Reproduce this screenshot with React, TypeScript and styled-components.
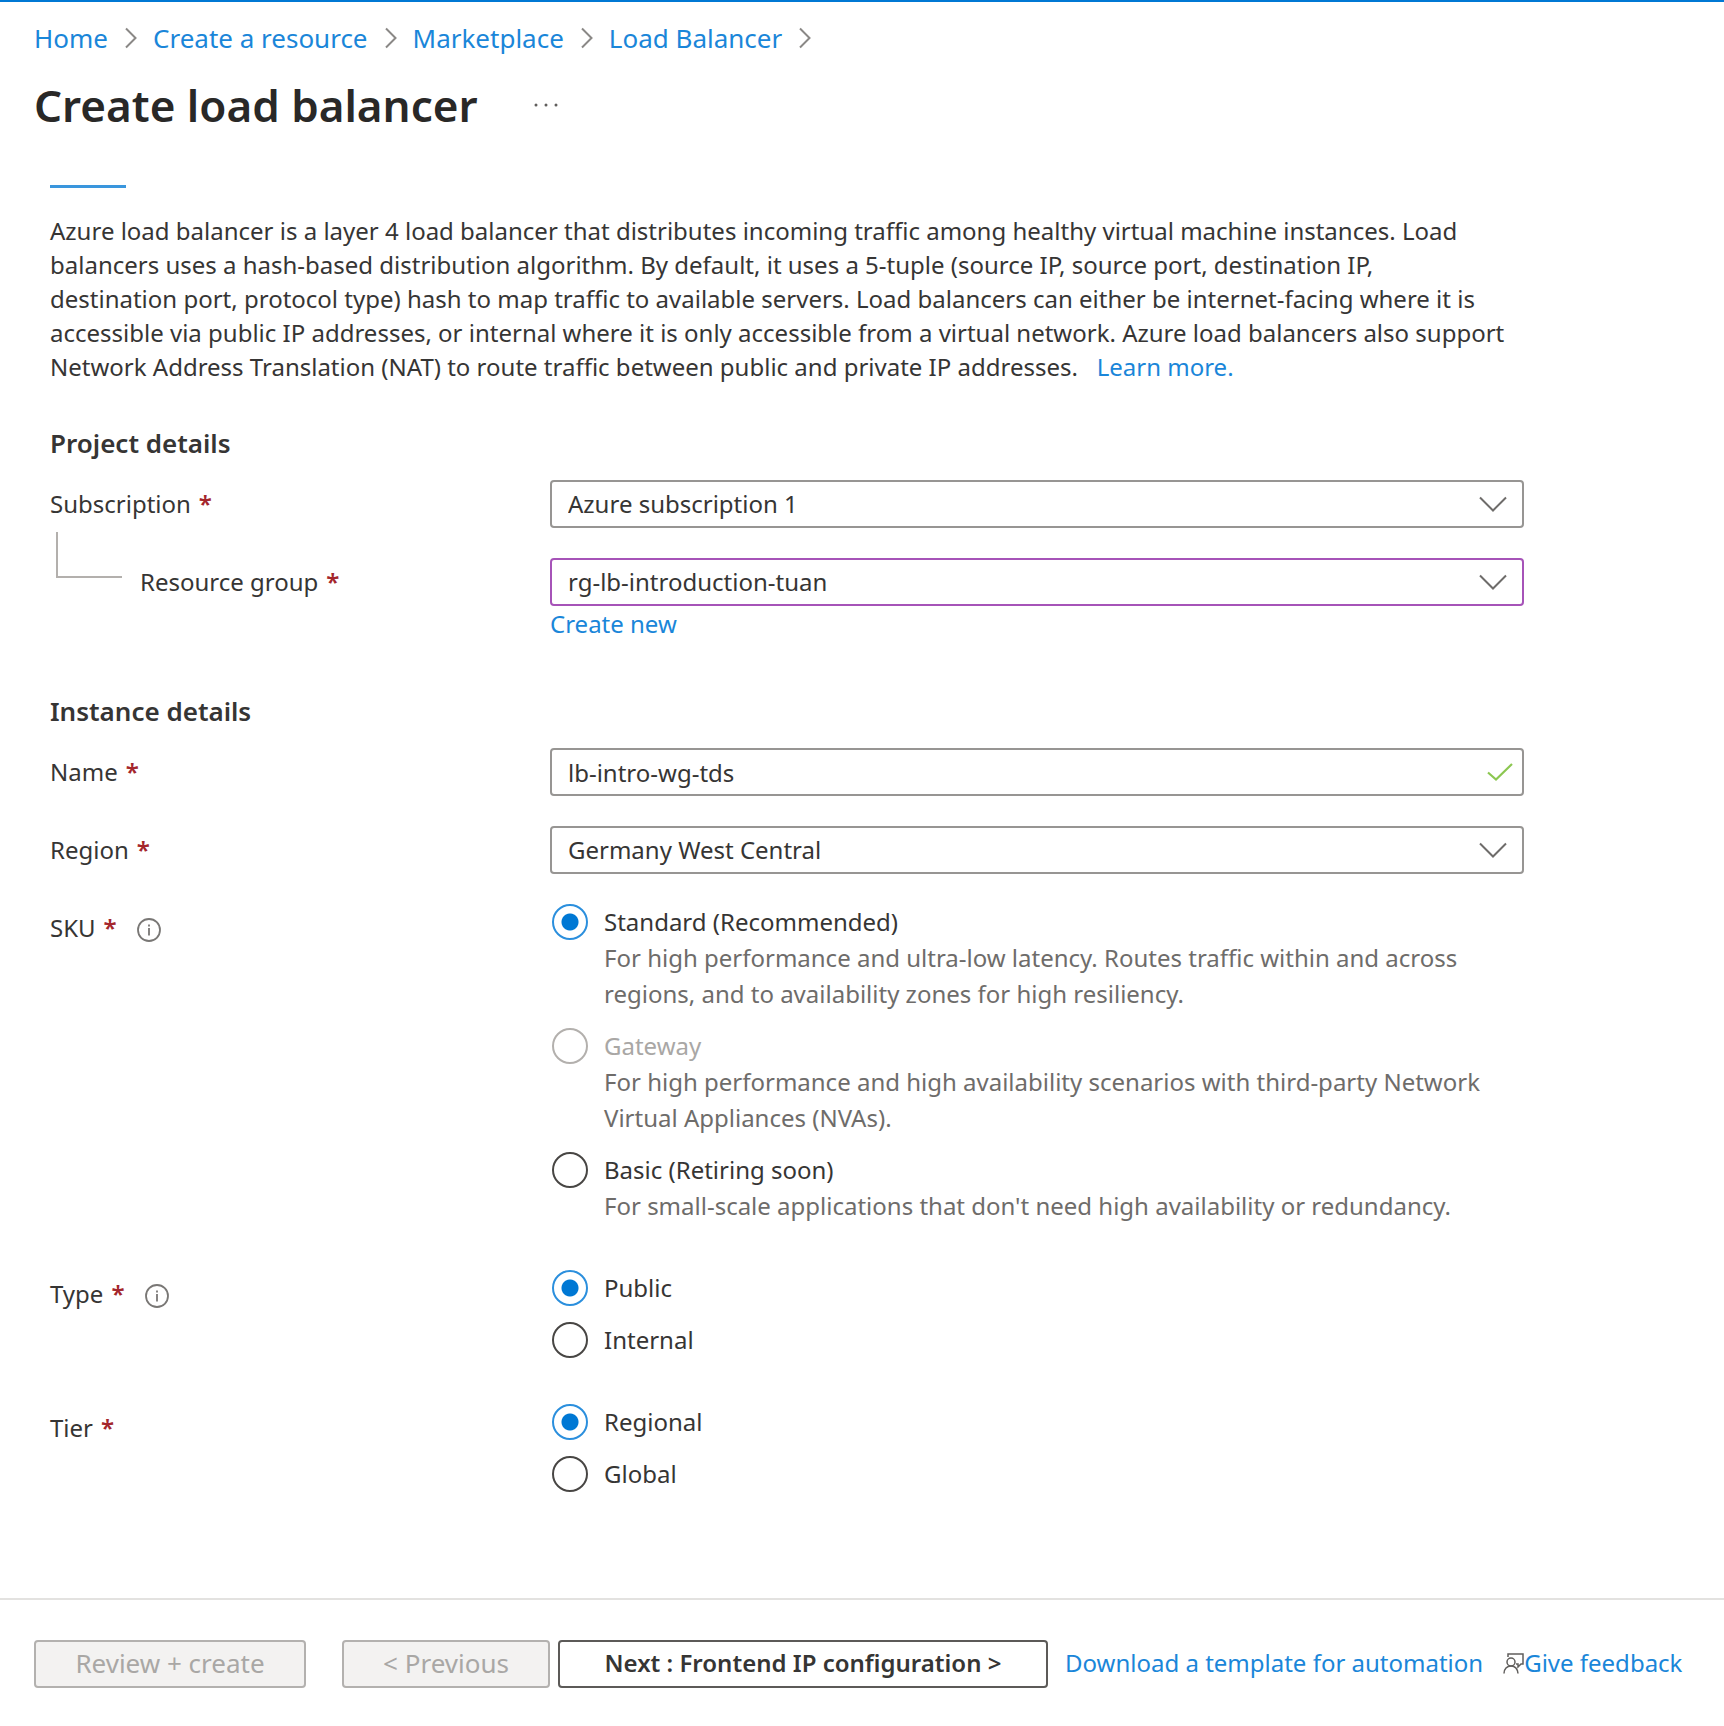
import React, { useState } from "react";
import styled, { createGlobalStyle } from "styled-components";

const GlobalStyle = createGlobalStyle`
  *, *::before, *::after { box-sizing: border-box; }
  body {
    margin: 0;
    background: #fff;
    color: #363534;
    font: 400 24px/34px "Noto Sans", "Open Sans", sans-serif;
  }
`;

const Page = styled.div`
  min-height: 100vh;
  display: flex;
  flex-direction: column;
  border-top: 2px solid #0078d4;
`;

const Header = styled.header`
  padding: 19px 34px 0;
`;

const Link = styled.a`
  color: #1a86d9;
  text-decoration: none;
  &:hover { text-decoration: underline; }
`;

const Crumbs = styled.ol`
  display: flex;
  flex-wrap: wrap;
  margin: 0;
  padding: 0;
  list-style: none;
  font-size: 26px;
`;

const Crumb = styled.li`
  display: flex;
  align-items: center;
  gap: 17px;
  padding-right: 16px;
`;

const TitleRow = styled.div`
  display: flex;
  align-items: center;
  gap: 56px;
  margin-top: 20px;
`;

const Title = styled.h1`
  margin: 0;
  font-size: 44px;
  line-height: 60px;
  font-weight: 600;
  color: #292827;
`;

const MoreButton = styled.button`
  display: flex;
  padding: 0;
  border: 0;
  background: none;
  cursor: pointer;
`;

const Form = styled.form`
  flex: 1;
  width: 100%;
  max-width: 1574px;
  padding: 50px 50px 60px;
`;

const TabMarker = styled.div`
  width: 76px;
  height: 3px;
  background: #3a96dd;
`;

const Intro = styled.p`
  margin: 26px 0 42px;
`;

const SectionTitle = styled.h2`
  margin: 0 0 20px;
  font-size: 26px;
  line-height: 34px;
  font-weight: 600;
`;

const Section = styled.section`
  margin-bottom: 53px;
`;

const Rows = styled.div`
  display: grid;
  gap: 30px;
`;

const Row = styled.div`
  display: grid;
  grid-template-columns: 500px minmax(0, 1fr);
`;

const LabelCell = styled.div`
  display: flex;
  align-items: flex-start;
  padding-top: 7px;
`;

const Star = styled.span`
  margin-left: 8px;
  color: #a4262c;
  font-weight: 600;
`;

const InfoButton = styled.button`
  display: flex;
  margin: 7px 0 0 20px;
  padding: 0;
  border: 0;
  background: none;
`;

const Branch = styled.span`
  width: 66px;
  height: 46px;
  margin: -33px 18px 0 6px;
  border: solid #b3b0ad;
  border-width: 0 0 2px 2px;
`;

const Control = styled.div`
  position: relative;
`;

const fieldBox = `
  display: block;
  width: 100%;
  height: 48px;
  padding: 0 60px 0 16px;
  border-radius: 4px;
  background: #fff;
  color: #363534;
  font: inherit;
  appearance: none;
  outline: none;
`;

const Select = styled.select<{ $edited?: boolean }>`
  ${fieldBox}
  border: 2px solid ${(p) => (p.$edited ? "#a653b8" : "#979593")};
`;

const Input = styled.input`
  ${fieldBox}
  border: 2px solid #979593;
`;

const FieldIcon = styled.span<{ $right: number }>`
  position: absolute;
  top: 0;
  right: ${(p) => p.$right}px;
  height: 48px;
  display: flex;
  align-items: center;
  pointer-events: none;
`;

const Below = styled.div`
  margin-top: 1px;
`;

const RadioGroup = styled.div`
  display: grid;
  gap: 16px;
  padding-bottom: 16px;
  padding-left: 2px;
`;

const Option = styled.div`
  display: grid;
  grid-template-columns: 36px minmax(0, 1fr);
  column-gap: 16px;
  line-height: 36px;
`;

const Radio = styled.input`
  appearance: none;
  width: 36px;
  height: 36px;
  margin: 0;
  border: 2px solid #484644;
  border-radius: 50%;
  background: #fff;
  &:checked {
    border-color: #2b8fdd;
    background: radial-gradient(circle, #0078d4 8px, #fff 9px);
  }
  &:disabled { border-color: #b3b0ad; }
`;

const OptionLabel = styled.label<{ $disabled?: boolean }>`
  color: ${(p) => (p.$disabled ? "#a9a7a5" : "#363534")};
`;

const OptionText = styled.p`
  grid-column: 2;
  margin: 0;
  color: #6e6c6a;
`;

const Footer = styled.footer`
  display: flex;
  flex-wrap: wrap;
  align-items: center;
  gap: 8px;
  padding: 40px 24px 38px 34px;
  border-top: 2px solid #e3e2e0;
`;

const Button = styled.button<{ $width: number; $apart?: boolean }>`
  width: ${(p) => p.$width}px;
  height: 48px;
  margin-right: ${(p) => (p.$apart ? 28 : 0)}px;
  padding: 0 0 2px;
  border: 2px solid #5c5a58;
  border-radius: 4px;
  background: #fff;
  color: #363534;
  font: inherit;
  font-weight: 600;
  white-space: nowrap;
  &:disabled {
    border-color: #b3b1af;
    background: #f3f2f1;
    color: #a9a7a5;
    font-size: 26px;
    font-weight: 400;
  }
`;

const FooterLinks = styled.div`
  display: flex;
  gap: 20px;
  margin-left: 9px;
  padding-bottom: 2px;
  white-space: nowrap;
`;

const FeedbackLink = styled(Link)`
  display: flex;
  align-items: center;
`;

const CrumbChevron = () => (
  <svg width="12" height="22" viewBox="0 0 12 22" fill="none" stroke="#8a8886" strokeWidth="2" aria-hidden="true">
    <path d="M1 1.5 10.5 11 1 20.5" />
  </svg>
);

const SelectChevron = () => (
  <svg width="28" height="16" viewBox="0 0 28 16" fill="none" stroke="#6e6c6a" strokeWidth="2" aria-hidden="true">
    <path d="M1 1.5 14 14.5 27 1.5" />
  </svg>
);

const CheckIcon = () => (
  <svg width="26" height="18" viewBox="0 0 26 18" fill="none" stroke="#8cc751" strokeWidth="2.2" aria-hidden="true">
    <path d="M1 9.5 9 16.5 25 1" />
  </svg>
);

const InfoIcon = () => (
  <svg width="24" height="24" viewBox="0 0 24 24" fill="none" stroke="#797775" strokeWidth="1.8" aria-hidden="true">
    <circle cx="12" cy="12" r="11" />
    <path d="M12 10v7.500M12 6.500v2" />
  </svg>
);

const FeedbackIcon = () => (
  <svg width="21" height="21" viewBox="0 0 21 21" fill="none" stroke="#605e5c" strokeWidth="1.5" aria-hidden="true">
    <path d="M5 4V1h15v10h-2l-3 3v-3h-2" />
    <circle cx="8" cy="9" r="4" />
    <path d="M1 20.500c0-4.500 3-7.500 7-7.500s6.500 3 7 7.500" />
  </svg>
);

const crumbs = ["Home", "Create a resource", "Marketplace", "Load Balancer"];

type Choice = { name: string; text?: string; disabled?: boolean };

const groups: { label: string; info?: boolean; choices: Choice[] }[] = [
  {
    label: "SKU",
    info: true,
    choices: [
      {
        name: "Standard (Recommended)",
        text: "For high performance and ultra-low latency. Routes traffic within and across regions, and to availability zones for high resiliency.",
      },
      {
        name: "Gateway",
        disabled: true,
        text: "For high performance and high availability scenarios with third-party Network Virtual Appliances (NVAs).",
      },
      {
        name: "Basic (Retiring soon)",
        text: "For small-scale applications that don't need high availability or redundancy.",
      },
    ],
  },
  { label: "Type", info: true, choices: [{ name: "Public" }, { name: "Internal" }] },
  { label: "Tier", choices: [{ name: "Regional" }, { name: "Global" }] },
];

function ChoiceRow({ label, info, choices }: (typeof groups)[number]) {
  const [picked, setPicked] = useState(choices[0].name);
  return (
    <Row>
      <LabelCell>
        <span id={`${label}-label`}>{label}</span>
        <Star>*</Star>
        {info && (
          <InfoButton type="button" aria-label={`About ${label}`}>
            <InfoIcon />
          </InfoButton>
        )}
      </LabelCell>
      <RadioGroup role="radiogroup" aria-labelledby={`${label}-label`}>
        {choices.map((c, i) => (
          <Option key={c.name}>
            <Radio
              type="radio"
              id={`${label}-${i}`}
              name={label}
              checked={picked === c.name}
              disabled={c.disabled}
              onChange={() => setPicked(c.name)}
            />
            <OptionLabel htmlFor={`${label}-${i}`} $disabled={c.disabled}>
              {c.name}
            </OptionLabel>
            {c.text && <OptionText>{c.text}</OptionText>}
          </Option>
        ))}
      </RadioGroup>
    </Row>
  );
}

type SelectRowProps = {
  id: string;
  label: string;
  value: string;
  nested?: boolean;
  edited?: boolean;
  children?: React.ReactNode;
};

function SelectRow({ id, label, value, nested, edited, children }: SelectRowProps) {
  return (
    <Row>
      <LabelCell>
        {nested && <Branch />}
        <label htmlFor={id}>{label}</label>
        <Star>*</Star>
      </LabelCell>
      <Control>
        <Select id={id} $edited={edited} defaultValue={value}>
          <option>{value}</option>
        </Select>
        <FieldIcon $right={17}>
          <SelectChevron />
        </FieldIcon>
        {children}
      </Control>
    </Row>
  );
}

export default function App() {
  return (
    <Page>
      <GlobalStyle />
      <Header>
        <nav aria-label="Breadcrumb">
          <Crumbs>
            {crumbs.map((c) => (
              <Crumb key={c}>
                <Link href="#">{c}</Link>
                <CrumbChevron />
              </Crumb>
            ))}
          </Crumbs>
        </nav>
        <TitleRow>
          <Title>Create load balancer</Title>
          <MoreButton type="button" aria-label="More">
            <svg width="24" height="4" viewBox="0 0 24 4" fill="#605e5c" aria-hidden="true">
              <circle cx="2" cy="2" r="1.500" />
              <circle cx="12" cy="2" r="1.500" />
              <circle cx="22" cy="2" r="1.500" />
            </svg>
          </MoreButton>
        </TitleRow>
      </Header>

      <Form>
        <TabMarker />
        <Intro>
          Azure load balancer is a layer 4 load balancer that distributes incoming traffic among healthy virtual
          machine instances. Load balancers uses a hash-based distribution algorithm. By default, it uses a 5-tuple
          (source IP, source port, destination IP, destination{"\u00a0"}port, protocol type) hash to map traffic to
          available servers. Load balancers can either be internet-facing where it is accessible via public IP
          addresses, or internal where it is only accessible from a virtual network. Azure load balancers also support
          Network Address Translation (NAT) to route traffic between public and private IP addresses.
          {"\u00a0\u00a0 "}
          <Link href="#">Learn more.</Link>
        </Intro>

        <Section>
          <SectionTitle>Project details</SectionTitle>
          <Rows>
            <SelectRow id="subscription" label="Subscription" value="Azure subscription 1" />
            <SelectRow id="group" label="Resource group" value="rg-lb-introduction-tuan" nested edited>
              <Below>
                <Link href="#">Create new</Link>
              </Below>
            </SelectRow>
          </Rows>
        </Section>

        <SectionTitle>Instance details</SectionTitle>
        <Rows>
          <Row>
            <LabelCell>
              <label htmlFor="name">Name</label>
              <Star>*</Star>
            </LabelCell>
            <Control>
              <Input id="name" type="text" defaultValue="lb-intro-wg-tds" />
              <FieldIcon $right={11}>
                <CheckIcon />
              </FieldIcon>
            </Control>
          </Row>
          <SelectRow id="region" label="Region" value="Germany West Central" />
          {groups.map((g) => (
            <ChoiceRow key={g.label} {...g} />
          ))}
        </Rows>
      </Form>

      <Footer>
        <Button type="button" disabled $width={272} $apart>
          Review + create
        </Button>
        <Button type="button" disabled $width={208}>
          &lt; Previous
        </Button>
        <Button type="button" $width={490}>
          Next : Frontend IP configuration &gt;
        </Button>
        <FooterLinks>
          <Link href="#">Download a template for automation</Link>
          <FeedbackLink href="#">
            <FeedbackIcon />
            Give feedback
          </FeedbackLink>
        </FooterLinks>
      </Footer>
    </Page>
  );
}
